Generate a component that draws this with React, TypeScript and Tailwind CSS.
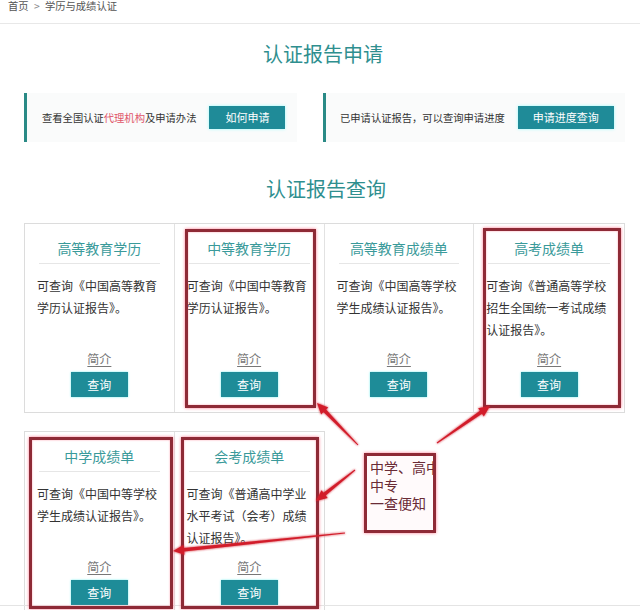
import React from "react";

type Card = { title: string; lines: string };

const row1: Card[] = [
  { title: "高等教育学历", lines: "可查询《中国高等教育学历认证报告》。" },
  { title: "中等教育学历", lines: "可查询《中国中等教育学历认证报告》。" },
  { title: "高等教育成绩单", lines: "可查询《中国高等学校学生成绩认证报告》。" },
  { title: "高考成绩单", lines: "可查询《普通高等学校招生全国统一考试成绩认证报告》。" },
];

const row2: Card[] = [
  { title: "中学成绩单", lines: "可查询《中国中等学校学生成绩认证报告》。" },
  { title: "会考成绩单", lines: "可查询《普通高中学业水平考试（会考）成绩认证报告》。" },
];

function CardView({ c, last }: { c: Card; last?: boolean }) {
  return (
    <div
      className={
        "flex h-[188px] flex-col items-stretch " +
        (last ? "" : "border-r border-[#e2e2e2]")
      }
    >
      <div className="pt-[14px] text-center text-[14px] leading-[20px] text-[#3a9a9a]">
        {c.title}
      </div>
      <div className="mx-[14px] mt-[5px] h-px bg-[#e6e6e6]" />
      <div className="mt-[11px] flex-1 px-[12px] text-[12px] leading-[22px] text-[#333]">
        {c.lines}
      </div>
      <div className="text-center text-[12px] leading-[16px] text-[#777] underline underline-offset-2">
        简介
      </div>
      <div className="mt-[5px] mb-[15px] flex justify-center">
        <div className="flex h-[25px] w-[57px] items-center justify-center bg-[#1e8c98] text-[12px] text-white shadow-[0_0_2px_#7ee]">
          查询
        </div>
      </div>
    </div>
  );
}

function arrowPoints(tx: number, ty: number, hx: number, hy: number) {
  const dx = hx - tx;
  const dy = hy - ty;
  const len = Math.sqrt(dx * dx + dy * dy);
  const ux = dx / len;
  const uy = dy / len;
  const px = -uy;
  const py = ux;
  const headLen = 11;
  const headW = 5;
  const bx = hx - ux * headLen;
  const by = hy - uy * headLen;
  const tw = 0.5;
  const sw = 1.8;
  const pts = [
    [tx + px * tw, ty + py * tw],
    [bx + px * sw, by + py * sw],
    [bx + px * headW, by + py * headW],
    [hx, hy],
    [bx - px * headW, by - py * headW],
    [bx - px * sw, by - py * sw],
    [tx - px * tw, ty - py * tw],
  ];
  return pts.map((p) => p[0].toFixed(1) + "," + p[1].toFixed(1)).join(" ");
}

function RedBox({ cls }: { cls: string }) {
  return (
    <div
      className={
        "pointer-events-none absolute border-[3px] border-[#8e2a36] shadow-[0_0_3px_#ff7a90,inset_0_0_2px_#ff9aa8] " +
        cls
      }
    />
  );
}

export default function App() {
  return (
    <div className="relative h-[610px] w-[640px] overflow-hidden bg-white font-['Noto_Sans_CJK_SC','Microsoft_YaHei',sans-serif]">
      {/* breadcrumb */}
      <div className="h-[24px] border-b border-[#e8e8e8] px-[8px] text-[10.3px] leading-[12px] text-[#555]">
        首页 <span className="mx-[3px] text-[#888]">&gt;</span> 学历与成绩认证
      </div>

      <div className="mt-[16px] pl-[6px] text-center text-[20px] leading-[28px] text-[#2f8f8f]">
        认证报告申请
      </div>

      <div className="mt-[25px] flex gap-[26px] pl-[24px]">
        <div className="flex h-[49px] w-[273px] shrink-0 items-center border-l-[3px] border-[#2a8a86] bg-[#fafbfb] pl-[15px]">
          <span className="whitespace-nowrap text-[10.3px] text-[#333]">
            查看全国认证<span className="text-[#e0566a]">代理机构</span>及申请办法
          </span>
          <div className="ml-[13px] flex h-[23px] w-[76px] shrink-0 items-center justify-center bg-[#1f8b98] text-[11px] text-white shadow-[0_0_3px_#9ff]">
            如何申请
          </div>
        </div>
        <div className="flex h-[49px] w-[302px] shrink-0 items-center border-l-[3px] border-[#2a8a86] bg-[#fafbfb] pl-[14px]">
          <span className="whitespace-nowrap text-[10.3px] text-[#333]">已申请认证报告，可以查询申请进度</span>
          <div className="ml-[13px] flex h-[23px] w-[96px] shrink-0 items-center justify-center bg-[#1f8b98] text-[11px] text-white shadow-[0_0_3px_#9ff]">
            申请进度查询
          </div>
        </div>
      </div>

      <div className="mt-[33px] pl-[12px] text-center text-[20px] leading-[28px] text-[#2f8f8f]">
        认证报告查询
      </div>

      <div className="mx-[24px] mt-[20px] grid w-[601px] grid-cols-4 border border-[#dcdcdc]">
        {row1.map((c, i) => (
          <CardView key={c.title} c={c} last={i === row1.length - 1} />
        ))}
      </div>

      <div className="mx-[24px] mt-[18px] grid w-[301px] grid-cols-2 border border-[#dcdcdc]">
        {row2.map((c, i) => (
          <CardView key={c.title} c={c} last={i === row2.length - 1} />
        ))}
      </div>

      {/* faint bottom line */}
      <div className="pointer-events-none absolute left-0 top-[605px] h-px w-[640px] bg-[#e4e4e4]" />

      {/* annotation boxes */}
      <RedBox cls="left-[185px] top-[229px] h-[179px] w-[131px]" />
      <RedBox cls="left-[483px] top-[228px] h-[180px] w-[138px]" />
      <RedBox cls="left-[29px] top-[437px] h-[172px] w-[144px]" />
      <RedBox cls="left-[181px] top-[437px] h-[172px] w-[138px]" />

      <div className="absolute left-[364px] top-[453px] h-[80px] w-[72px] overflow-hidden border-[3px] border-[#8e2a36] bg-[#fffafb] pl-[3px] pt-[2px] shadow-[0_0_3px_#ff7a90]">
        <div className="whitespace-nowrap text-[14px] leading-[18px] text-[#6a2b36]">
          中学、高中
          <br />
          中专
          <br />
          一查便知
        </div>
      </div>

      <svg
        className="pointer-events-none absolute left-0 top-0"
        width="640"
        height="610"
        viewBox="0 0 640 610"
      >
        <defs>
          <filter id="glow" x="-20%" y="-20%" width="140%" height="140%">
            <feGaussianBlur stdDeviation="0.8" result="b" />
            <feMerge>
              <feMergeNode in="b" />
              <feMergeNode in="SourceGraphic" />
            </feMerge>
          </filter>
        </defs>
        <g fill="#d21f2c" filter="url(#glow)">
          <polygon points={arrowPoints(358, 445, 317, 403)} />
          <polygon points={arrowPoints(437, 443, 490, 406)} />
          <polygon points={arrowPoints(355, 470, 316, 501)} />
          <polygon points={arrowPoints(345, 533, 173, 551)} />
        </g>
      </svg>
    </div>
  );
}
